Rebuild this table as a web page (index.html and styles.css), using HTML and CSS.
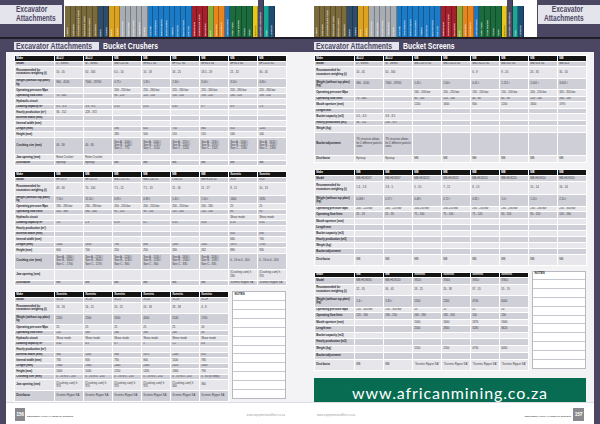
FILE: index.html
```html
<!DOCTYPE html>
<html lang="en">
<head>
<meta charset="utf-8">
<title>Excavator Attachments</title>
<link rel="stylesheet" href="styles.css">
</head>
<body>
<div class="spread">

<!-- LEFT PAGE -->
<section class="page page-l">
  <header class="top">
    <div class="sec"><div class="sec-box"><span class="cond">Excavator</span><span class="cond">Attachments</span></div></div>
    <div class="tabs">
      <div class="tab ol"><span>Loaders</span></div>
      <div class="tab ol"><span>Excavators</span></div>
      <div class="tab ol"><span>Articulated Dump Trucks</span></div>
      <div class="tab ol"><span>Rigid Dump Trucks</span></div>
      <div class="tab ol"><span>Backhoe Loaders</span></div>
      <div class="tab ol"><span>Skid Steers</span></div>
      <div class="tab sl"><span>Dozers</span></div>
      <div class="tab sl"><span>Graders</span></div>
      <div class="tab am"><span>Pavers</span></div>
      <div class="tab am"><span>Rollers</span></div>
      <div class="tab gr"><span>Mobile Cranes</span></div>
      <div class="tab gr"><span>Tower Cranes</span></div>
      <div class="tab gr"><span>Crawler Cranes</span></div>
      <div class="tab gr"><span>Telehandlers</span></div>
      <div class="tab gr"><span>Forklifts</span></div>
      <div class="tab bl"><span>Drill Rigs</span></div>
      <div class="tab bl"><span>Rock Breakers</span></div>
      <div class="tab bl"><span>Mobile Crushers</span></div>
      <div class="tab bl"><span>Mobile Screens</span></div>
      <div class="tab bl"><span>Feeders</span></div>
      <div class="tab bl"><span>Conveyors</span></div>
      <div class="tab bl"><span>Washing Plants</span></div>
      <div class="tab bl"><span>Mine Lifts</span></div>
      <div class="tab rd"><span>Underground</span></div>
      <div class="tab rd"><span>Underground Trucks</span></div>
      <div class="tab rd"><span>Roof Bolters</span></div>
      <div class="tab lg"><span>Utility</span></div>
      <div class="tab or"><span>Generators</span></div>
      <div class="tab or"><span>Compressors</span></div>
      <div class="tab b2"><span>Lighting Towers</span></div>
      <div class="tab dg"><span>Tipper Trucks</span></div>
      <div class="tab dg"><span>Truck Mounted</span></div>
      <div class="tab dg"><span>Trailers</span></div>
      <div class="tab dg"><span>Buses</span></div>
      <div class="tab ye"><span>Demolition</span></div>
      <div class="tab cur"><span>Excavator Attachments</span></div>
      <div class="tab te"><span>Tyres</span></div>
      <div class="tab db"><span>Lubricants</span></div>
    </div>
  </header>
  <div class="rule"></div>
  <div class="band"><span class="crumb"><span class="cond">Excavator Attachments</span></span><span class="title"><span class="cond">Bucket Crushers</span></span></div>
  <div class="body">
    <div class="strip"></div>
    <div class="main">
      <div class="content">
        <table class="spec t8">
          <colgroup><col class="lab"><col class="val"><col class="val"><col class="val"><col class="val"><col class="val"><col class="val"><col class="val"><col class="val"></colgroup>
          <thead><tr class="h5"><th>Make</th><th>ALLU</th><th>ALLU</th><th>MB</th><th>MB</th><th>MB</th><th>MB</th><th>MB</th><th>MB</th></tr></thead>
          <tbody>
            <tr class="h5"><th>Model</th><td>D - Series</td><td>M - Series</td><td>MB-C50 S4</td><td>BF60.1 S4</td><td>BF70.2 S4</td><td>BF80.3 S4</td><td>BF90.3 S4</td><td>BF120.4 S4</td></tr>
            <tr class="h115"><th>Recommended for excavators weighing (t)</th><td>10 - 45</td><td>50 - 160</td><td>6.5 - 10</td><td>10 - 18</td><td>16 - 25</td><td>18.5 - 29</td><td>21 - 32</td><td>30 - 45</td></tr>
            <tr class="h9"><th>Weight (without top plate) kg</th><td>960 - 4140</td><td>7000 - 29700</td><td>0.75 t</td><td>1.65 t</td><td>2.30 t</td><td>3.00 t</td><td>3.50 t</td><td>4.80 t</td></tr>
            <tr class="h5"><th>Operating pressure Mpa</th><td></td><td></td><td>200 - 250 bar</td><td>220 - 260 bar</td><td>220 - 260 bar</td><td>220 - 260 bar</td><td>220 - 260 bar</td><td>220 - 260 bar</td></tr>
            <tr class="h5"><th>Operating flow l/min</th><td>70 - 400</td><td></td><td>90 - 120</td><td>120 - 150</td><td>150 - 220</td><td>150 - 220</td><td>180 - 220</td><td>190 - 250</td></tr>
            <tr class="h5"><th>Hydraulic circuit</th><td></td><td></td><td></td><td></td><td></td><td></td><td></td><td></td></tr>
            <tr class="h5"><th>Loading capacity m³</th><td>0.5 - 4.3</td><td>3.8 - 8.5</td><td>0.15</td><td>0.55</td><td>0.45</td><td>0.7</td><td>0.9</td><td>1.3</td></tr>
            <tr class="h5"><th>Hourly production (m³)</th><td>36 - 152</td><td>228 - 372</td><td></td><td></td><td></td><td></td><td></td><td></td></tr>
            <tr class="h5"><th>External width (mm)</th><td></td><td></td><td></td><td></td><td></td><td></td><td></td><td></td></tr>
            <tr class="h5"><th>Internal width (mm)</th><td></td><td></td><td></td><td></td><td></td><td></td><td></td><td></td></tr>
            <tr class="h5"><th>Length (mm)</th><td></td><td></td><td>590</td><td>610</td><td>750</td><td>860</td><td>810</td><td>1205</td></tr>
            <tr class="h5"><th>Height (mm)</th><td></td><td></td><td>280</td><td>500</td><td>510</td><td>510</td><td>540</td><td>540</td></tr>
            <tr class="h17"><th>Crushing size (mm)</th><td>40 - 80</td><td>40 - 80</td><td>Size A - 1000 /<br>Size B - 1240 /<br>Size C - 770</td><td>Size A - 1000 /<br>Size B - 1745 /<br>Size C - 1100</td><td>Size A - 1150 /<br>Size B - 2000 /<br>Size C - 1200</td><td>Size A - 1330 /<br>Size B - 1970 /<br>Size C - 1325</td><td>Size A - 1340 /<br>Size B - 2185 /<br>Size C - 1390</td><td>Size A - 1620 /<br>Size B - 2185 /<br>Size C - 1390</td></tr>
            <tr class="h5"><th>Jaw opening (mm)</th><td>Rotor Crusher</td><td>Rotor Crusher</td><td></td><td></td><td></td><td></td><td></td><td></td></tr>
            <tr class="h5"><th>Distributor</th><td>Epiroup</td><td>Epiroup</td><td>MB</td><td>MB</td><td>MB</td><td>MB</td><td>MB</td><td>MB</td></tr>
          </tbody>
        </table>

        <table class="spec t8">
          <colgroup><col class="lab"><col class="val"><col class="val"><col class="val"><col class="val"><col class="val"><col class="val"><col class="val"><col class="val"></colgroup>
          <thead><tr class="h5"><th>Make</th><th>MB</th><th>MB</th><th>MB</th><th>MB</th><th>MB</th><th>MB</th><th>Xcentric</th><th>Xcentric</th></tr></thead>
          <tbody>
            <tr class="h5"><th>Model</th><td>BF135.8</td><td>BF150.10</td><td>MB-L120 S2</td><td>MB-L140 S2</td><td>L160 S2</td><td>MB-R200 S2</td><td>XC6</td><td>XC8</td></tr>
            <tr class="h13"><th>Recommended for excavators weighing (t)</th><td>43 - 60</td><td>70 - 100</td><td>7.5 - 12</td><td>7.5 - 13</td><td>11 - 16</td><td>11 - 17</td><td>8 - 11</td><td>10 - 13</td></tr>
            <tr class="h8"><th>Weight (without top plate) kg</th><td>7.50 t</td><td>11.50 t</td><td>0.95 t</td><td>0.98 t</td><td>1.45 t</td><td>1.50 t</td><td>1400</td><td>1835</td></tr>
            <tr class="h5"><th>Operating pressure Mpa</th><td>230 - 280 bar</td><td>230 - 280 bar</td><td>200 - 250 bar</td><td>200 - 250 bar</td><td>200 - 250 bar</td><td>200 - 260</td><td>25</td><td>25</td></tr>
            <tr class="h5"><th>Operating flow l/min</th><td>320 - 380</td><td>380 - 430</td><td>95 - 120</td><td>98 - 150</td><td>110 - 200</td><td>120 - 200</td><td>80</td><td>95</td></tr>
            <tr class="h5"><th>Hydraulic circuit</th><td></td><td></td><td></td><td></td><td></td><td></td><td>Shear mode</td><td>Shear mode</td></tr>
            <tr class="h5"><th>Loading capacity m³</th><td>1.6</td><td>2.3</td><td>0.19</td><td>0.2</td><td>0.35</td><td>0.43</td><td>0.35</td><td>0.35</td></tr>
            <tr class="h5"><th>Hourly production (m³)</th><td></td><td></td><td></td><td></td><td></td><td></td><td></td><td></td></tr>
            <tr class="h5"><th>External width (mm)</th><td></td><td></td><td></td><td></td><td></td><td></td><td>850</td><td>930</td></tr>
            <tr class="h5"><th>Internal width (mm)</th><td></td><td></td><td></td><td></td><td></td><td></td><td>660</td><td>730</td></tr>
            <tr class="h5"><th>Length (mm)</th><td>1300</td><td>1450</td><td>790</td><td>800</td><td>1160</td><td>1165</td><td>1670</td><td>1700</td></tr>
            <tr class="h5"><th>Height (mm)</th><td>600</td><td>700</td><td>250</td><td>250</td><td>260</td><td>262</td><td>880</td><td>930</td></tr>
            <tr class="h16"><th>Crushing size (mm)</th><td>Size A - 1860 /<br>Size B - 3000 /<br>Size C - 1700</td><td>Size A - 2130 /<br>Size B - 3600 /<br>Size C - 2170</td><td>Size A - 1230 /<br>Size B - 1230 /<br>Size C - 800</td><td>Size A - 1530 /<br>Size B - 1230 /<br>Size C - 800</td><td>Size A - 1630 /<br>Size B - 1300 /<br>Size C - 835</td><td>Size A - 2030 /<br>Size B - 1435 /<br>Size C - 835</td><td>0 - 16 to 0 - 200</td><td>0 - 16 to 0 - 200</td></tr>
            <tr class="h11"><th>Jaw opening (mm)</th><td></td><td></td><td></td><td></td><td></td><td></td><td>(Crushing cam) h 280</td><td>(Crushing cam) h 370</td></tr>
            <tr class="h5"><th>Distributor</th><td>MB</td><td>MB</td><td>MB</td><td>MB</td><td>MB</td><td>MB</td><td>Xcentric Ripper SA</td><td>Xcentric Ripper SA</td></tr>
          </tbody>
        </table>

        <div class="pair">
          <table class="spec t6">
            <colgroup><col class="lab"><col class="val"><col class="val"><col class="val"><col class="val"><col class="val"><col class="val"></colgroup>
            <thead><tr class="h5"><th>Make</th><th>Xcentric</th><th>Xcentric</th><th>Xcentric</th><th>Xcentric</th><th>Xcentric</th><th>Xcentric</th></tr></thead>
            <tbody>
              <tr class="h5"><th>Model</th><td>XC13</td><td>XC18</td><td>XC21</td><td>XC24</td><td>XC29</td><td>XC5F</td></tr>
              <tr class="h11"><th>Recommended for excavators weighing (t)</th><td>13 - 16</td><td>16 - 21</td><td>20 - 25</td><td>24 - 33</td><td>28 - 38</td><td>4 - 8</td></tr>
              <tr class="h11"><th>Weight (without top plate) kg</th><td>2165</td><td>2560</td><td>3500</td><td>4000</td><td>5540</td><td>1700</td></tr>
              <tr class="h5"><th>Operating pressure Mpa</th><td>25</td><td>25</td><td>25</td><td>25</td><td>25</td><td>24</td></tr>
              <tr class="h5"><th>Operating flow l/min</th><td>120</td><td>160</td><td>160</td><td>160</td><td>200</td><td>90</td></tr>
              <tr class="h5"><th>Hydraulic circuit</th><td>Shear mode</td><td>Shear mode</td><td>Shear mode</td><td>Shear mode</td><td>Shear mode</td><td>Shear mode</td></tr>
              <tr class="h5"><th>Loading capacity m³</th><td>0.42</td><td>0.5</td><td>0.7</td><td>1</td><td>1.2</td><td>0.4</td></tr>
              <tr class="h5"><th>Hourly production (m³)</th><td></td><td></td><td></td><td></td><td></td><td></td></tr>
              <tr class="h5"><th>External width (mm)</th><td>930</td><td>1100</td><td>930</td><td>1075</td><td>1260</td><td>810</td></tr>
              <tr class="h5"><th>Internal width (mm)</th><td>730</td><td>900</td><td>730</td><td>900</td><td>1100</td><td>780</td></tr>
              <tr class="h5"><th>Length (mm)</th><td>1940</td><td>1940</td><td>2460</td><td>2460</td><td>2820</td><td>1800</td></tr>
              <tr class="h5"><th>Height (mm)</th><td>1000</td><td>1040</td><td>1250</td><td>1305</td><td>1360</td><td>790</td></tr>
              <tr class="h5"><th>Crushing size (mm)</th><td>0 - 16 to 0 - 200</td><td>0 - 16 to 0 - 200</td><td>0 - 16 to 0 - 250</td><td>0 - 16 to 0 - 250</td><td>0 - 16 to 0 - 250</td><td>0 - 80 (6 steps)</td></tr>
              <tr class="h11"><th>Jaw opening (mm)</th><td>(Crushing cam) h 370</td><td>(Crushing cam) h 370</td><td>(Crushing cam) h 370</td><td>(Crushing cam) h 370</td><td>(Crushing cam) h 440</td><td>360</td></tr>
              <tr class="h11"><th>Distributor</th><td>Xcentric Ripper SA</td><td>Xcentric Ripper SA</td><td>Xcentric Ripper SA</td><td>Xcentric Ripper SA</td><td>Xcentric Ripper SA</td><td>Xcentric Ripper SA</td></tr>
            </tbody>
          </table>
          <div class="notes notes-l">
            <div class="nl">NOTES</div><div class="nl"></div><div class="nl"></div><div class="nl"></div><div class="nl"></div><div class="nl"></div><div class="nl"></div><div class="nl"></div><div class="nl"></div><div class="nl"></div><div class="nl"></div><div class="nl"></div>
          </div>
        </div>
      </div>
      <footer class="foot">
        <span class="pno">156</span>
        <span class="ftitle">EQUIPMENT AFRICA HANDBOOK 2015/2016</span>
        <span class="fsp"></span>
        <span class="furl">www.equipmentandfleet.co.za</span>
      </footer>
    </div>
  </div>
</section>

<!-- RIGHT PAGE -->
<section class="page page-r">
  <header class="top">
    <div class="tabs">
      <div class="tab ol"><span>Loaders</span></div>
      <div class="tab ol"><span>Excavators</span></div>
      <div class="tab ol"><span>Articulated Dump Trucks</span></div>
      <div class="tab ol"><span>Rigid Dump Trucks</span></div>
      <div class="tab ol"><span>Backhoe Loaders</span></div>
      <div class="tab ol"><span>Skid Steers</span></div>
      <div class="tab sl"><span>Dozers</span></div>
      <div class="tab sl"><span>Graders</span></div>
      <div class="tab am"><span>Pavers</span></div>
      <div class="tab am"><span>Rollers</span></div>
      <div class="tab gr"><span>Mobile Cranes</span></div>
      <div class="tab gr"><span>Tower Cranes</span></div>
      <div class="tab gr"><span>Crawler Cranes</span></div>
      <div class="tab gr"><span>Telehandlers</span></div>
      <div class="tab gr"><span>Forklifts</span></div>
      <div class="tab bl"><span>Drill Rigs</span></div>
      <div class="tab bl"><span>Rock Breakers</span></div>
      <div class="tab bl"><span>Mobile Crushers</span></div>
      <div class="tab bl"><span>Mobile Screens</span></div>
      <div class="tab bl"><span>Feeders</span></div>
      <div class="tab bl"><span>Conveyors</span></div>
      <div class="tab bl"><span>Washing Plants</span></div>
      <div class="tab bl"><span>Mine Lifts</span></div>
      <div class="tab rd"><span>Underground</span></div>
      <div class="tab rd"><span>Underground Trucks</span></div>
      <div class="tab rd"><span>Roof Bolters</span></div>
      <div class="tab lg"><span>Utility</span></div>
      <div class="tab or"><span>Generators</span></div>
      <div class="tab or"><span>Compressors</span></div>
      <div class="tab b2"><span>Lighting Towers</span></div>
      <div class="tab dg"><span>Tipper Trucks</span></div>
      <div class="tab dg"><span>Truck Mounted</span></div>
      <div class="tab dg"><span>Trailers</span></div>
      <div class="tab dg"><span>Buses</span></div>
      <div class="tab ye"><span>Demolition</span></div>
      <div class="tab cur"><span>Excavator Attachments</span></div>
      <div class="tab te"><span>Tyres</span></div>
      <div class="tab db"><span>Lubricants</span></div>
    </div>
    <div class="sec"><div class="sec-box"><span class="cond">Excavator</span><span class="cond">Attachments</span></div></div>
  </header>
  <div class="rule"></div>
  <div class="band"><span class="crumb"><span class="cond">Excavator Attachments</span></span><span class="title"><span class="cond">Bucket Screens</span></span></div>
  <div class="body">
    <div class="main">
      <div class="content">
        <table class="spec t8">
          <colgroup><col class="lab"><col class="val"><col class="val"><col class="val"><col class="val"><col class="val"><col class="val"><col class="val"><col class="val"></colgroup>
          <thead><tr class="h5"><th>Make</th><th>ALLU</th><th>ALLU</th><th>MB</th><th>MB</th><th>MB</th><th>MB</th><th>MB</th><th>MB</th></tr></thead>
          <tbody>
            <tr class="h5"><th>Model</th><td>D - Series</td><td>M - Series</td><td>MB-LS170 S2</td><td>MB-LS220 S2</td><td>MB-LS220 S2</td><td>MB-S10 S4</td><td>MB-S18 S4</td><td>MB-S23</td></tr>
            <tr class="h12"><th>Recommended for excavators weighing (t)</th><td>10 - 45</td><td>50 - 160</td><td></td><td></td><td>6 - 9</td><td>9 - 20</td><td>20 - 35</td><td>35 - 50</td></tr>
            <tr class="h11"><th>Weight (without top plate) (kg)</th><td>960 - 4140</td><td>7000 - 29700</td><td>1.45 t</td><td>2.60 t</td><td>0.41 t</td><td>1.151 t</td><td>2.001 t</td><td>3.601 t</td></tr>
            <tr class="h6"><th>Operating pressure Mpa</th><td></td><td></td><td>160 - 200 bar</td><td>200 - 250 bar</td><td>130 - 150 bar</td><td>150 - 200 bar</td><td>200 - 250 bar</td><td>320 - 350 bar</td></tr>
            <tr class="h5"><th>Operating flow l/min</th><td>70 - 400</td><td></td><td>80 - 100</td><td>120 - 140</td><td>40 - 60</td><td>60 - 80</td><td>120 - 140</td><td>160 - 180</td></tr>
            <tr class="h6"><th>Mouth aperture (mm)</th><td></td><td></td><td>1200</td><td>1600</td><td>800</td><td>1200</td><td>1600</td><td>1970</td></tr>
            <tr class="h5"><th>Length mm</th><td></td><td></td><td></td><td></td><td></td><td></td><td></td><td></td></tr>
            <tr class="h6"><th>Bucket capacity (m3)</th><td>0.5 - 4.3</td><td>3.8 - 8.5</td><td></td><td></td><td></td><td></td><td></td><td></td></tr>
            <tr class="h5"><th>Hourly production (m3)</th><td>36 - 152</td><td>228 - 372</td><td></td><td></td><td></td><td></td><td></td><td></td></tr>
            <tr class="h6"><th>Weight (kg)</th><td></td><td></td><td></td><td></td><td></td><td></td><td></td><td></td></tr>
            <tr class="h23"><th>Bucket adjustment</th><td>TS structure allows for 2 different particle sizes</td><td>TS structure allows for 2 different particle sizes</td><td></td><td></td><td></td><td></td><td></td><td></td></tr>
            <tr class="h7"><th>Distributor</th><td>Epiroup</td><td>Epiroup</td><td>MB</td><td>MB</td><td>MB</td><td>MB</td><td>MB</td><td>MB</td></tr>
          </tbody>
        </table>

        <table class="spec t8">
          <colgroup><col class="lab"><col class="val"><col class="val"><col class="val"><col class="val"><col class="val"><col class="val"><col class="val"><col class="val"></colgroup>
          <thead><tr class="h5"><th>Make</th><th>MB</th><th>MB</th><th>MB</th><th>MB</th><th>MB</th><th>MB</th><th>MB</th><th>MB</th></tr></thead>
          <tbody>
            <tr class="h6"><th>Model</th><td>MB-HDS207</td><td>MB-HDS307</td><td>MB-HDS212</td><td>MB-HDS312</td><td>MB-HDS214</td><td>MB-HDS220</td><td>MB-HDS314</td><td>MB-HDS320</td></tr>
            <tr class="h13"><th>Recommended for excavators weighing (t)</th><td>1.3 - 2.8</td><td>2.8 - 5</td><td>5 - 10</td><td>7 - 11</td><td>8 - 13</td><td></td><td>10 - 14</td><td>16 - 24</td></tr>
            <tr class="h12"><th>Weight (without top plate) (kg)</th><td>0.088 t</td><td>0.17 t</td><td>0.48 t</td><td>0.72 t</td><td>0.82 t</td><td>1.0 t</td><td>1.20 t</td><td>2.10 t</td></tr>
            <tr class="h5"><th>Operating pressure Mpa</th><td>200 - 220 bar</td><td>200 - 220 bar</td><td>200-250 bar</td><td>200-250 bar</td><td>200 - 250 bar</td><td>230 - 280 bar</td><td>230 - 280 bar</td><td>250 - 300 bar</td></tr>
            <tr class="h6"><th>Operating flow l/min</th><td>25 - 23</td><td>25 - 35</td><td>75 - 100</td><td>75 - 100</td><td>75 - 120</td><td>90 - 150</td><td>90 - 150</td><td>120 - 160</td></tr>
            <tr class="h6"><th>Mouth aperture (mm)</th><td></td><td></td><td></td><td></td><td></td><td></td><td></td><td></td></tr>
            <tr class="h5"><th>Length mm</th><td></td><td></td><td></td><td></td><td></td><td></td><td></td><td></td></tr>
            <tr class="h6"><th>Bucket capacity (m3)</th><td></td><td></td><td></td><td></td><td></td><td></td><td></td><td></td></tr>
            <tr class="h5"><th>Hourly production (m3)</th><td></td><td></td><td></td><td></td><td></td><td></td><td></td><td></td></tr>
            <tr class="h6"><th>Weight (kg)</th><td></td><td></td><td></td><td></td><td></td><td></td><td></td><td></td></tr>
            <tr class="h5"><th>Bucket adjustment</th><td></td><td></td><td></td><td></td><td></td><td></td><td></td><td></td></tr>
            <tr class="h11"><th>Distributor</th><td>MB</td><td>MB</td><td>MB</td><td>MB</td><td>MB</td><td>MB</td><td>MB</td><td>MB</td></tr>
          </tbody>
        </table>

        <div class="pair">
          <table class="spec t6">
            <colgroup><col class="lab"><col class="val"><col class="val"><col class="val"><col class="val"><col class="val"><col class="val"></colgroup>
            <thead><tr class="h5"><th>Make</th><th>MB</th><th>MB</th><th>Xcentric</th><th>Xcentric</th><th>Xcentric</th><th>Xcentric</th></tr></thead>
            <tbody>
              <tr class="h6"><th>Model</th><td>MB-HDS830</td><td>MB-HDS520</td><td>XS20</td><td>XS40</td><td>XS50</td><td>XS60</td></tr>
              <tr class="h115"><th>Recommended for excavators weighing (t)</th><td>22 - 35</td><td>30 - 45</td><td>18 - 25</td><td>24 - 38</td><td>37 - 55</td><td>55 - 70</td></tr>
              <tr class="h115"><th>Weight (without top plate) (kg)</th><td>2.4 t</td><td>3.35 t</td><td>1550</td><td>2200</td><td>4730</td><td>6000</td></tr>
              <tr class="h5"><th>Operating pressure Mpa</th><td>250 - 300 bar</td><td>250 - 300 bar</td><td>20</td><td>25</td><td>25</td><td>20</td></tr>
              <tr class="h6"><th>Operating flow l/min</th><td>120 - 160</td><td>230 - 250</td><td>160 - 180</td><td>180 - 200</td><td>100</td><td>130</td></tr>
              <tr class="h6"><th>Mouth aperture (mm)</th><td></td><td></td><td>1000</td><td>1600</td><td>1870</td><td>1940</td></tr>
              <tr class="h6"><th>Length mm</th><td></td><td></td><td>2500</td><td>2800</td><td>3280</td><td>3620</td></tr>
              <tr class="h6"><th>Bucket capacity (m3)</th><td></td><td></td><td></td><td></td><td></td><td></td></tr>
              <tr class="h6"><th>Hourly production (m3)</th><td></td><td></td><td></td><td></td><td></td><td></td></tr>
              <tr class="h7"><th>Weight (kg)</th><td></td><td></td><td>1550</td><td>2200</td><td>4730</td><td>6000</td></tr>
              <tr class="h6"><th>Bucket adjustment</th><td></td><td></td><td></td><td></td><td></td><td></td></tr>
              <tr class="h11"><th>Distributor</th><td>MB</td><td>MB</td><td>"Xcentric Ripper SA"</td><td>"Xcentric Ripper SA"</td><td>"Xcentric Ripper SA"</td><td>"Xcentric Ripper SA"</td></tr>
            </tbody>
          </table>
          <div class="notes notes-r">
            <div class="nl">NOTES</div><div class="nl"></div><div class="nl"></div><div class="nl"></div><div class="nl"></div><div class="nl"></div><div class="nl"></div><div class="nl"></div><div class="nl"></div><div class="nl"></div><div class="nl"></div>
          </div>
        </div>

        <div class="banner">www.africanmining.co.za</div>
      </div>
      <footer class="foot">
        <span class="furl">www.equipmentandfleet.co.za</span>
        <span class="fsp"></span>
        <span class="ftitle">EQUIPMENT AFRICA HANDBOOK 2015/2016</span>
        <span class="pno">157</span>
      </footer>
    </div>
    <div class="strip"></div>
  </div>
</section>

</div>
</body>
</html>
```

FILE: styles.css
```css
* { box-sizing: border-box; }
html, body { margin: 0; padding: 0; }
body {
  width: 600px;
  height: 424px;
  overflow: hidden;
  background: #fff;
  font-family: "Liberation Sans", Arial, sans-serif;
  color: #333;
}
.spread { display: flex; width: 600px; height: 424px; }
.page { width: 300px; height: 424px; display: flex; flex-direction: column; }

/* condensed display type */
.cond { display: inline-block; transform: scaleX(0.8); transform-origin: left center; white-space: nowrap; }

/* ---------- top header ---------- */
.top { height: 37px; display: flex; align-items: flex-end; background: #fff; }
.sec { width: 64px; height: 37px; background: #4b4762; padding-top: 5px; flex-shrink: 0; }
.sec-box {
  width: 62px; height: 19px;
  background: #e4e4ec; color: #4b4762;
  font-weight: bold; font-size: 8.2px; line-height: 8.4px;
  padding: 1.2px 0 0 16px;
  display: flex; flex-direction: column; align-items: flex-start;
  white-space: nowrap; overflow: hidden;
}
.page-r .sec { width: 63px; margin-left: 13px; }
.page-r .sec-box { margin-left: 1px; align-items: flex-end; padding: 1.2px 16px 0 0; }
.page-r .sec-box .cond { transform-origin: right center; }

.tabs { display: flex; align-items: flex-end; height: 37px; margin-left: 1px; }
.page-r .tabs { margin-left: 14px; }
.tab {
  width: 5.526px; height: 31px; flex-shrink: 0;
  border-right: 0.6px solid rgba(0,0,0,0.28);
  display: flex; align-items: flex-end; justify-content: center;
  overflow: hidden;
}
.tab span {
  writing-mode: vertical-rl; transform: rotate(180deg);
  font-size: 2.2px; line-height: 2.5px; color: #fff; font-weight: bold;
  white-space: nowrap; padding-top: 1.2px;
}
.ol { background: #7b6b3c; }
.sl { background: #2e4d6b; }
.am { background: #dba320; }
.gr { background: #a8adb3; }
.bl { background: #1b7bc6; }
.rd { background: #a3202c; }
.lg { background: #8cac3c; }
.or { background: #e8841e; }
.b2 { background: #2275c0; }
.dg { background: #1c6b3c; }
.ye { background: #e9c61d; }
.ye span { color: #5a4a10; }
.cur { background: #4b4762; height: 37px; }
.te { background: #18a795; }
.db { background: #1e4b72; }

/* ---------- section band ---------- */
.rule { height: 2px; background: #1e1e26; }
.band {
  height: 13px; background: #4b4762;
  display: flex; align-items: center; gap: 4px;
  padding-left: 14px;
  font-weight: bold; font-size: 8.6px; line-height: 8px;
}
.crumb { background: #e4e4ec; color: #4b4762; width: 85px; height: 8px; padding-left: 2px; overflow: hidden; }
.title { color: #fff; }

/* ---------- body ---------- */
.body { flex: 1; display: flex; min-height: 0; }
.strip { width: 6px; background: #4b4762; flex-shrink: 0; }
.main { flex: 1; display: flex; flex-direction: column; min-width: 0; }
.content {
  height: 350px; background: #f3f3f5; overflow: hidden;
  padding: 3px 14px 0 8px;
  display: flex; flex-direction: column; gap: 5px;
}
.page-r .content { padding: 3px 8px 0 14px; gap: 6px; }

/* ---------- spec tables ---------- */
.spec {
  border-collapse: collapse; table-layout: fixed;
  font-size: 2.8px; line-height: 3.4px; letter-spacing: -0.03px;
  color: #3a3a3e; flex-shrink: 0;
}
.t8 { width: 272px; }
.t6 { width: 214px; }
col.lab { width: 40px; }
col.val { width: 29px; }
.spec th, .spec td {
  border: 0.6px solid #fff;
  padding: 0 1.2px;
  text-align: left; vertical-align: middle;
  font-weight: normal; overflow: hidden;
}
.spec thead th { background: #141414; color: #fff; font-weight: bold; }
.spec tbody tr:nth-child(odd) th, .spec tbody tr:nth-child(odd) td { background: #cfcfd7; }
.spec tbody tr:nth-child(even) th, .spec tbody tr:nth-child(even) td { background: #e7e7eb; }
.spec tbody th { font-weight: bold; color: #26262c; }

.h5 { height: 5.5px; }
.h6 { height: 6.5px; }
.h7 { height: 7.5px; }
.h8 { height: 8.5px; }
.h9 { height: 9.5px; }
.h11 { height: 11px; }
.h115 { height: 11.5px; }
.h12 { height: 12px; }
.h13 { height: 12.5px; }
.h16 { height: 16px; }
.h17 { height: 17.5px; }
.h23 { height: 23px; }

.pair { display: flex; align-items: flex-start; gap: 3px; flex-shrink: 0; }
.notes {
  width: 55px; background: #fff;
  border: 0.8px solid #b8b8c0;
  display: flex; flex-direction: column;
}
.notes-l { height: 108px; }
.notes-r { height: 98px; margin-top: -1px; }
.nl {
  flex: 1; border-bottom: 0.6px solid #c6c6ce;
  font-weight: bold; font-size: 3px; line-height: 3.6px;
  padding: 0.8px 1.5px; color: #222;
}
.nl:last-child { border-bottom: 0; }

.banner {
  height: 29px; background: #086c52; color: #fff; flex-shrink: 0;
  display: flex; align-items: center; justify-content: center;
  font-family: Lato, "DejaVu Sans", sans-serif;
  font-size: 16px; letter-spacing: 0.9px;
  margin-top: 1px;
}

/* ---------- footer ---------- */
.foot {
  flex: 1; border-top: 1px solid #dcdce0; background: #fff;
  display: flex; align-items: center;
  padding: 2px 15px 0 9px;
}
.page-r .foot { padding: 2px 10px 0 17px; }
.pno {
  width: 10px; height: 13px; background: #8a8a8e; color: #fff;
  font-weight: bold; font-size: 5px; line-height: 13px; text-align: center;
  letter-spacing: -0.2px;
}
.page-r .pno { width: 11px; }
.ftitle {
  font-size: 2.2px; font-weight: bold; color: #555; margin: 2px 2px 0 2px;
}
.fsp { flex: 1; }
.furl { font-size: 2.7px; color: #9a9aa0; margin-top: 2px; letter-spacing: 0.1px; }
```
